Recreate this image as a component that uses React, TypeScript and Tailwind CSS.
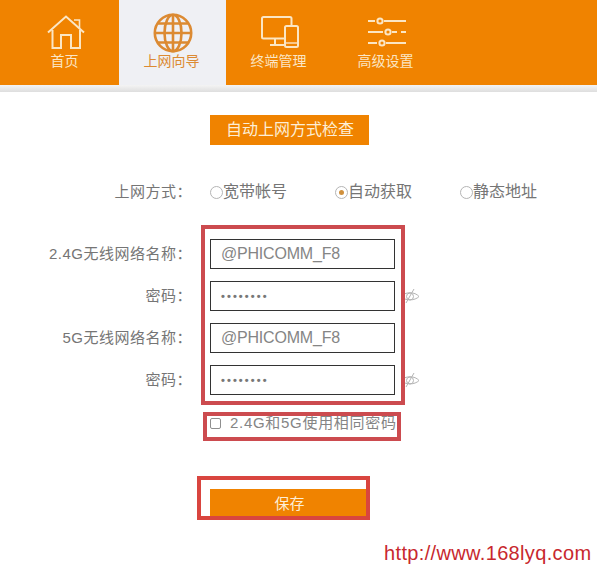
const FONT = "font-['Liberation_Sans','Noto_Sans_CJK_SC',sans-serif]";

const HomeIcon = () => (
  <svg width="38" height="34" viewBox="0 0 38 34" fill="none" stroke="currentColor" strokeWidth="2" className="block">
    <path d="M1 17.5 L19 1.5 L37 17.5" />
    <path d="M27 5 H32.5 V13" strokeWidth="1.6" />
    <path d="M5.5 15 V33 H14 V20 H24 V33 H33 V15" />
  </svg>
);

const GlobeIcon = () => (
  <svg width="40" height="40" viewBox="0 0 40 40" fill="none" stroke="currentColor" strokeWidth="2.6" className="block">
    <circle cx="20" cy="20" r="18.2" />
    <ellipse cx="20" cy="20" rx="8.5" ry="18.2" />
    <path d="M20 2 V38 M2 20 H38 M5 10.5 H35 M5 29.5 H35" />
  </svg>
);

const DevicesIcon = () => (
  <svg width="38" height="32" viewBox="0 0 38 32" fill="none" stroke="currentColor" strokeWidth="2" className="block">
    <path d="M23 22.5 H2.5 a1.5 1.5 0 0 1 -1.5 -1.5 V2.5 a1.5 1.5 0 0 1 1.5 -1.5 H29 a1.5 1.5 0 0 1 1.5 1.5 V9" />
    <path d="M14 23 V28 M9 29 H23" />
    <rect x="24" y="10" width="13" height="21" rx="1.5" />
    <path d="M24 27 H37" strokeWidth="1.4" />
  </svg>
);

const SlidersIcon = () => (
  <svg width="38" height="30" viewBox="0 0 38 30" fill="none" stroke="currentColor" strokeWidth="2" className="block">
    <path d="M0 4 H7 M16 4 H38" />
    <circle cx="12" cy="4" r="2.6" />
    <path d="M0 15 H15 M24 15 H29 M33 15 H38" />
    <circle cx="20" cy="15" r="2.6" />
    <path d="M0 26 H9 M18 26 H38" />
    <circle cx="14" cy="26" r="2.6" />
  </svg>
);

const EyeOff = () => (
  <svg width="20" height="16" viewBox="0 0 20 16" fill="none" stroke="#b4b4b4" strokeWidth="1" className="block">
    <path d="M1 8.5 C5 3.5 15 3.5 19 8.5 C15 13 5 13 1 8.5 Z" />
    <circle cx="10" cy="8.5" r="3.5" />
    <path d="M6 15 L14 1" />
  </svg>
);

const tabs = [
  { label: "首页", icon: <HomeIcon />, active: false, iconBox: "h-[34px] mt-[15px] mb-[4px]" },
  { label: "上网向导", icon: <GlobeIcon />, active: true, iconBox: "h-[40px] mt-[13px]" },
  { label: "终端管理", icon: <DevicesIcon />, active: false, iconBox: "h-[32px] mt-[16px] mb-[5px]" },
  { label: "高级设置", icon: <SlidersIcon />, active: false, iconBox: "h-[30px] mt-[17px] mb-[6px]" },
];

const Radio = ({ label, checked, className }: { label: string; checked?: boolean; className: string }) => (
  <div className={`flex items-center ${className}`}>
    <span className="flex h-[13px] w-[13px] items-center justify-center rounded-full border border-[#b5b5b5] bg-white">
      {checked && <span className="h-[5px] w-[5px] rounded-full bg-[#d0903c]" />}
    </span>
    <span className="text-[16px] leading-5 text-[#757575]">{label}</span>
  </div>
);

const Field = ({ label, value, password }: { label: string; value: string; password?: boolean }) => (
  <div className="flex h-[30px] items-center">
    <label className="w-[192px] text-right text-[15px] tracking-[0.5px] text-[#757575]">{label}</label>
    <div className="ml-[18px] flex h-[30px] w-[185px] items-center border border-[#333] bg-white pl-[10px] text-[16px] tracking-[-0.2px] text-[#858585]">
      {password ? <span className="text-[11px] font-bold tracking-[2.1px] text-[#777]">••••••••</span> : value}
    </div>
    {password && (
      <span className="ml-[5px]">
        <EyeOff />
      </span>
    )}
  </div>
);

export default function App() {
  return (
    <div className={`relative h-[567px] w-[597px] overflow-hidden bg-white ${FONT}`}>
      <nav className="flex h-[85px] bg-[#f08300] pl-3">
        {tabs.map((tab) => (
          <div
            key={tab.label}
            className={`flex w-[107px] flex-col items-center ${
              tab.active ? "bg-[#eff0f4] text-[#dc8a32]" : "text-[#fbe6c4]"
            }`}
          >
            <div className={tab.iconBox}>{tab.icon}</div>
            <span className="mr-[2px] mt-[-2px] text-[14px] leading-5">{tab.label}</span>
          </div>
        ))}
      </nav>
      <div className="h-[7px] bg-gradient-to-b from-[#f4f4f4] to-[#dedede]" />

      <main className="flex flex-col">
        <button className="ml-[210px] mt-[23px] h-[30px] w-[159px] bg-[#f08300] pl-[1px] text-[16px] text-[#fdeed6]">
          自动上网方式检查
        </button>

        <div className="mt-[37px] flex h-5 items-center">
          <span className="w-[192px] text-right text-[15px] tracking-[0.5px] text-[#757575]">上网方式：</span>
          <Radio label="宽带帐号" className="ml-[18px] w-[125px]" />
          <Radio label="自动获取" checked className="w-[125px]" />
          <Radio label="静态地址" className="" />
        </div>

        <div className="mt-[37px] flex flex-col gap-3">
          <Field label="2.4G无线网络名称：" value="@PHICOMM_F8" />
          <Field label="密码：" value="" password />
          <Field label="5G无线网络名称：" value="@PHICOMM_F8" />
          <Field label="密码：" value="" password />
        </div>

        <div className="ml-[210px] mt-[18px] flex h-5 items-center">
          <span className="h-[11px] w-[11px] rounded-[2px] border border-[#8f8f8f] bg-white" />
          <span className="ml-[9px] text-[15px] leading-5 tracking-[0.7px] text-[#858585]">2.4G和5G使用相同密码</span>
        </div>

        <button className="ml-[210px] mt-[56px] h-[28px] w-[157px] bg-[#f08300] pl-[2px] pt-[2px] text-[15px] text-[#fdeed6]">
          保存
        </button>
      </main>

      {/* red annotation boxes drawn over the screenshot */}
      <div className="absolute left-[201px] top-[225px] h-[180px] w-[204px] border-4 border-[#cc4b4f]" />
      <div className="absolute left-[203px] top-[412px] h-[29px] w-[198px] border-4 border-[#cc4b4f]" />
      <div className="absolute left-[197px] top-[476px] h-[44px] w-[173px] border-4 border-[#d9453f]" />

      <div className="absolute left-[384px] top-[541px] text-[20px] leading-6 tracking-[0.35px] text-[#c8282e]">
        http://www.168lyq.com
      </div>
    </div>
  );
}
